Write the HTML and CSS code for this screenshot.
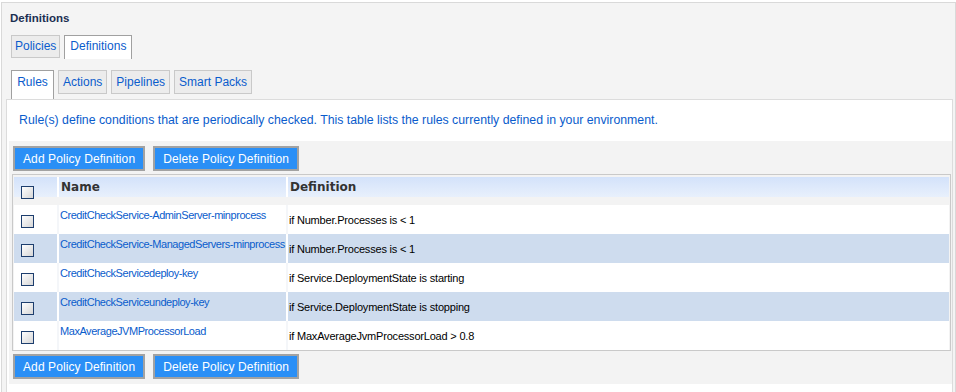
FILE: index.html
```html
<!DOCTYPE html>
<html lang="en">
<head>
  <meta charset="UTF-8" />
  <title>Definitions</title>
  <link rel="stylesheet" href="styles.css">
</head>
<body>
  <div class="panel">
    <h2 class="title">Definitions</h2>

    <div class="tabs top">
      <a class="tab">Policies</a>
      <a class="tab active">Definitions</a>
    </div>

    <div class="tabs sub">
      <a class="tab active">Rules</a>
      <a class="tab">Actions</a>
      <a class="tab">Pipelines</a>
      <a class="tab">Smart Packs</a>
    </div>

    <div class="content">
      <p class="intro">Rule(s) define conditions that are periodically checked. This table lists the rules currently defined in your environment.</p>

      <div class="area">
        <div class="buttons">
          <button class="btn">Add Policy Definition</button>
          <button class="btn">Delete Policy Definition</button>
        </div>

        <table class="grid">
          <thead>
            <tr class="head">
              <th class="c-check"><input type="checkbox" class="cb" /></th>
              <th class="c-name">Name</th>
              <th class="c-def">Definition</th>
            </tr>
          </thead>
          <tbody>
            <tr class="spacer"><td colspan="3"></td></tr>
            <tr>
              <td class="c-check"><input type="checkbox" class="cb" /></td>
              <td class="c-name"><a>CreditCheckService-AdminServer-minprocess</a></td>
              <td class="c-def">if Number.Processes is &lt; 1</td>
            </tr>
            <tr class="alt">
              <td class="c-check"><input type="checkbox" class="cb" /></td>
              <td class="c-name"><a>CreditCheckService-ManagedServers-minprocess</a></td>
              <td class="c-def">if Number.Processes is &lt; 1</td>
            </tr>
            <tr>
              <td class="c-check"><input type="checkbox" class="cb" /></td>
              <td class="c-name"><a>CreditCheckServicedeploy-key</a></td>
              <td class="c-def">if Service.DeploymentState is starting</td>
            </tr>
            <tr class="alt">
              <td class="c-check"><input type="checkbox" class="cb" /></td>
              <td class="c-name"><a>CreditCheckServiceundeploy-key</a></td>
              <td class="c-def">if Service.DeploymentState is stopping</td>
            </tr>
            <tr>
              <td class="c-check"><input type="checkbox" class="cb" /></td>
              <td class="c-name"><a>MaxAverageJVMProcessorLoad</a></td>
              <td class="c-def">if MaxAverageJvmProcessorLoad &gt; 0.8</td>
            </tr>
          </tbody>
        </table>

        <div class="buttons bottom">
          <button class="btn">Add Policy Definition</button>
          <button class="btn">Delete Policy Definition</button>
        </div>
      </div>
    </div>
  </div>
</body>
</html>
```

FILE: styles.css
```css
body {
  margin: 0;
  padding: 2px 0 0 1px;
  height: 390px;
  font-family: "Liberation Sans", Arial, sans-serif;
  background: #fff;
  overflow: hidden;
}
.panel {
  border: 1px solid #d9d9d9;
  border-bottom: none;
  background: #f4f4f4;
  padding: 0 2px 0 4px;
  height: 389px;
  display: flex;
  flex-direction: column;
}
.title {
  margin: 0;
  padding: 8px 0 0 4px;
  font-size: 11.5px;
  line-height: 14px;
  color: #1b2f52;
}
.tabs {
  display: flex;
  gap: 4px;
  margin-left: 5px;
  align-items: flex-start;
}
.tabs.top {
  margin-top: 10px;
}
.tabs.sub {
  margin-top: 11px;
}
.tab {
  display: block;
  box-sizing: border-box;
  font-size: 12px;
  line-height: 21px;
  height: 23px;
  padding: 0 3px;
  min-width: 43px;
  text-align: center;
  color: #0a5ccc;
  background: #ececec;
  border: 1px solid #c9c9c9;
}
.tab.active {
  background: #fff;
  border-color: #a0a0a0;
  border-bottom: none;
  height: 24px;
  padding: 0 5px;
}
.tabs.sub .tab {
  height: 24px;
  line-height: 23px;
  padding: 0 4px;
}
.tabs.sub .tab.active {
  height: 29px;
  margin-bottom: -5px;
  padding: 0 3px;
}
.content {
  flex: 1;
  margin-top: 5px;
  background: #fff;
  border: 1px solid #dcdcdc;
  border-bottom: none;
}
.intro {
  margin: 0;
  padding: 12px 0 13px 12px;
  font-size: 12.3px;
  line-height: 16px;
  color: #0a5ccc;
}
.area {
  margin-left: 2px;
  background: #f3f3f3;
  padding: 5px 0 5px 3px;
}
.buttons {
  display: flex;
  gap: 8px;
  margin-left: 1px;
}
.buttons.bottom {
  margin-top: 3px;
}
.btn {
  font-family: "Liberation Sans", Arial, sans-serif;
  font-size: 12px;
  color: #fff;
  background: #2a8ff6;
  border: 2px solid #a2a2a2;
  height: 25px;
  padding: 0 8px;
  letter-spacing: 0.1px;
}
.grid {
  margin-top: 3px;
  width: 939px;
  table-layout: fixed;
  border: 1px solid #c9c9c9;
  border-collapse: separate;
  border-spacing: 0;
  padding: 2px 1px 0 1px;
}
.grid th, .grid td {
  padding: 0;
  border-left: 2px solid #f4f6f9;
}
.grid th:first-child, .grid td:first-child {
  border-left: none;
}
.head th {
  height: 20px;
  background: linear-gradient(#d3e2fa, #e8f0fc);
  font-family: "DejaVu Sans", Verdana, sans-serif;
  font-size: 12px;
  font-weight: bold;
  color: #333;
  text-align: left;
  border-left-color: #fff;
}
.head th.c-name, .head th.c-def {
  padding-left: 2px;
}
.grid .c-check {
  width: 43px;
  padding-left: 7px;
  box-sizing: border-box;
}
.head .cb {
  position: relative;
  top: 5px;
}
.c-name {
  width: 225px;
}
.grid tbody tr {
  height: 29px;
}
.grid tbody tr td {
  background: #fff;
}
.grid tbody tr.spacer {
  height: 8px;
}
.grid tbody tr.spacer td {
  background: #f3f3f3;
}
.grid tbody tr.alt td {
  background: #cedcee;
  border-left-color: #fff;
}
.grid td.c-name {
  vertical-align: top;
  padding: 3px 0 0 1px;
  font-size: 11px;
  line-height: 14px;
  letter-spacing: -0.45px;
}
.grid td.c-name a {
  color: #0a5ccc;
  white-space: nowrap;
}
.grid td.c-def {
  padding-left: 1px;
  font-size: 11px;
  letter-spacing: -0.2px;
  color: #000;
}
.grid td.c-check .cb {
  position: relative;
  top: 1px;
}
.cb {
  appearance: none;
  margin: 0;
  width: 13px;
  height: 13px;
  border: 1px solid #1d3e6e;
  background: linear-gradient(135deg, #ffffff, #d6d6d6);
  vertical-align: middle;
}
```
